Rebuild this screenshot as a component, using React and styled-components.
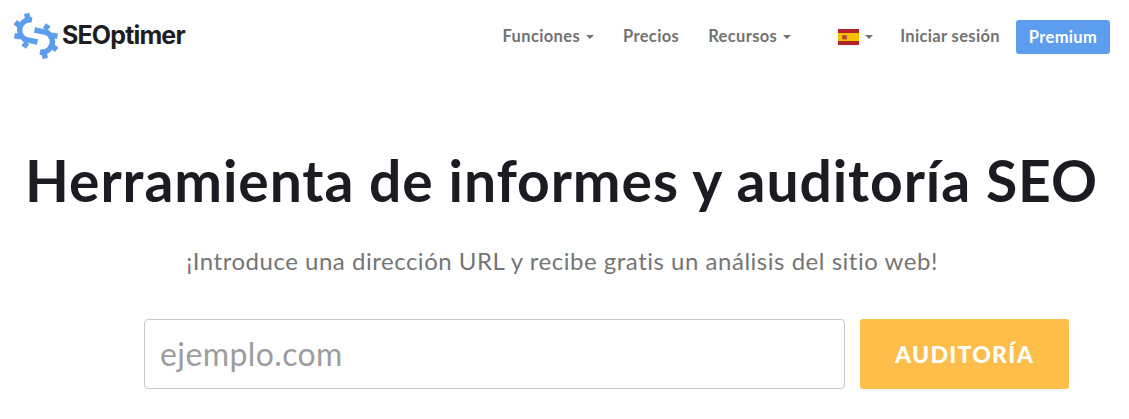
import React from "react";
import styled, { createGlobalStyle } from "styled-components";

const Global = createGlobalStyle`
  html, body { margin: 0; padding: 0; background: #fff; overflow: hidden; }
  body { font-family: "Lato", "Open Sans", sans-serif; }
`;
const Page = styled.div`width: 1129px; height: 419px; overflow: hidden; display: flex; flex-direction: column;`;
const Navbar = styled.header`height: 72px; display: flex; align-items: center; justify-content: space-between; padding: 0 19px 0 14px;`;
const Brand = styled.a`display: flex; align-items: center; gap: 4px; margin-top: 1px;`;
const BrandName = styled.span`font: 700 25px "Inter", sans-serif; letter-spacing: -.85px; color: #1e1e22; margin-top: -3px;`;
const Nav = styled.nav`display: flex; align-items: center;`;
const NavItem = styled.a`
  display: flex; align-items: center; gap: 6px;
  font: 700 16.5px "Lato", sans-serif; letter-spacing: .35px; color: #727272;
  margin-left: ${p => p.$gap}px;
`;
const Caret = styled.i`width: 0; height: 0; border-left: 4px solid transparent; border-right: 4px solid transparent; border-top: 4px solid #727272; margin-top: 2px;`;
const FlagIcon = styled.svg`margin-top: 2px;`;
const PremiumButton = styled.a`
  margin: 2px 0 0 16px; width: 94px; height: 34px; border-radius: 3px; background: #5c9ded; color: #fff;
  display: flex; align-items: center; justify-content: center; font: 700 16.5px "Lato", sans-serif; letter-spacing: .35px;
`;
const Hero = styled.main`display: flex; flex-direction: column; align-items: center;`;
const Title = styled.h1`margin: 70px 0 0 -6px; font: 700 57px/76px "Lato", sans-serif; letter-spacing: .92px; color: #1b1b22; white-space: nowrap; text-align: center;`;
const Subtitle = styled.p`margin: 27px 0 0 -5px; font: 400 24px/32px "Lato", sans-serif; letter-spacing: .52px; color: #757575;`;
const SearchRow = styled.form`display: flex; gap: 15px; margin: 42px 0 0 84px;`;
const SearchInput = styled.input`
  box-sizing: border-box; width: 701px; height: 70px; border: 1px solid #c8c8c8; border-radius: 4px; padding: 0 15px 2px;
  font: 400 32px "Lato", sans-serif; letter-spacing: .4px; color: #555; outline: none;
  &::placeholder { color: #9d9d9d; opacity: 1; }
`;
const AuditButton = styled.button`
  width: 209px; height: 70px; border: 0; border-radius: 3px; background: #ffbd4a; color: #fff;
  font: 900 23px "Lato", sans-serif; letter-spacing: 1.3px;
`;
const gearHalf = (
  <g>
    <path d="M18 7 A10.5 10.5 0 0 0 11 26.5 L23.5 29" fill="none" stroke="#5c9ded" strokeWidth="5.5" />
    <rect x="10.5" y="0.5" width="5.5" height="5.5" transform="rotate(-12 13 3)" fill="#5c9ded" />
    <rect x="0.5" y="8.5" width="5.5" height="5.5" transform="rotate(-50 3 11)" fill="#5c9ded" />
    <rect x="0" y="20.5" width="5.5" height="5.5" transform="rotate(-80 3 23)" fill="#5c9ded" />
    <rect x="8.5" y="29" width="5.5" height="5.5" transform="rotate(35 11 32)" fill="#5c9ded" />
  </g>
);
const Logo = () => (
  <svg width="44" height="47" viewBox="0 0 44 47" aria-hidden="true">
    {gearHalf}
    <g transform="rotate(180 22 23)">{gearHalf}</g>
  </svg>
);
const Flag = () => (
  <FlagIcon width="21" height="16" viewBox="0 0 21 16" aria-hidden="true">
    <rect width="21" height="16" fill="#b5202a"/>
    <rect y="4" width="21" height="8" fill="#f4c300"/>
    <rect x="4" y="6" width="5" height="4.5" rx="1" fill="#b5503a"/>
  </FlagIcon>
);
export default function App() {
  return (
    <Page>
      <Global />
      <Navbar>
        <Brand><Logo /><BrandName>SEOptimer</BrandName></Brand>
        <Nav>
          <NavItem $gap={0}>Funciones <Caret /></NavItem>
          <NavItem $gap={29}>Precios</NavItem>
          <NavItem $gap={29}>Recursos <Caret /></NavItem>
          <NavItem $gap={47}><Flag /><Caret /></NavItem>
          <NavItem $gap={27}>Iniciar sesión</NavItem>
          <PremiumButton>Premium</PremiumButton>
        </Nav>
      </Navbar>
      <Hero>
        <Title>Herramienta de informes y auditoría SEO</Title>
        <Subtitle>¡Introduce una dirección URL y recibe gratis un análisis del sitio web!</Subtitle>
        <SearchRow>
          <SearchInput placeholder="ejemplo.com" />
          <AuditButton type="button">AUDITORÍA</AuditButton>
        </SearchRow>
      </Hero>
    </Page>
  );
}
